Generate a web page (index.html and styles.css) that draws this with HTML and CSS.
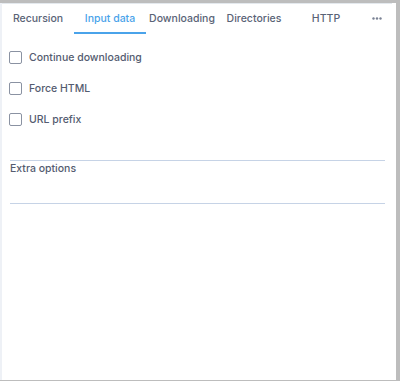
FILE: index.html
```html
<!DOCTYPE html>
<html>
  <head>
    <title>Options</title>
    <link rel="stylesheet" href="styles.css">
  </head>
  <body>
    <div class="panel">
      <div class="tabs">
        <div class="tab">Recursion</div>
        <div class="tab active">Input data</div>
        <div class="tab">Downloading</div>
        <div class="tab">Directories</div>
        <div class="tab">HTTP</div>
        <div class="tab more">
          <svg width="10" height="3" viewBox="0 0 10 3">
            <circle cx="1.5" cy="1.5" r="1.2" fill="#7a8294"/>
            <circle cx="5" cy="1.5" r="1.2" fill="#7a8294"/>
            <circle cx="8.5" cy="1.5" r="1.2" fill="#7a8294"/>
          </svg>
        </div>
      </div>
      <div class="content">
        <label class="check"><span class="box"></span>Continue downloading</label>
        <label class="check"><span class="box"></span>Force HTML</label>
        <label class="check"><span class="box"></span>URL prefix</label>
        <div class="field">
          <div class="field-label">Extra options</div>
        </div>
      </div>
    </div>
  </body>
</html>
```

FILE: styles.css
```css
body {
  margin: 0;
  background-color: #bdbdbd;
  font-family: Inter, "Noto Sans", sans-serif;
}

.panel {
  width: 394px;
  height: 377px;
  background-color: #fff;
  border-left: 2px solid #eef1f6;
}

.tabs {
  display: flex;
  width: 390px;
  margin-top: 3px;
  border-top: 1px solid #e4e9ee;
}

.tab {
  width: 72px;
  height: 28px;
  line-height: 29px;
  text-align: center;
  font-size: 10.5px;
  font-weight: 500;
  color: #5a6376;
  border-bottom: 2px solid transparent;
}

.tab.active {
  color: #4aa3ea;
  border-bottom-color: #4aa3ea;
}

.tab.more {
  width: 30px;
  display: flex;
  align-items: center;
  justify-content: center;
}

.content {
  padding: 17px 11px 0 7px;
}

.check {
  display: flex;
  align-items: center;
  gap: 7px;
  height: 13px;
  margin-bottom: 18px;
  font-size: 10.5px;
  font-weight: 500;
  color: #545c70;
}

.box {
  width: 11px;
  height: 11px;
  border: 1px solid #8a92a2;
  border-radius: 2px;
}

.field {
  margin-top: 34px;
  margin-left: 1px;
  height: 42px;
  border-top: 1px solid #c6d3e6;
  border-bottom: 1px solid #c6d3e6;
}

.field-label {
  font-size: 10.5px;
  font-weight: 500;
  color: #545c70;
  padding-top: 1px;
}
```
